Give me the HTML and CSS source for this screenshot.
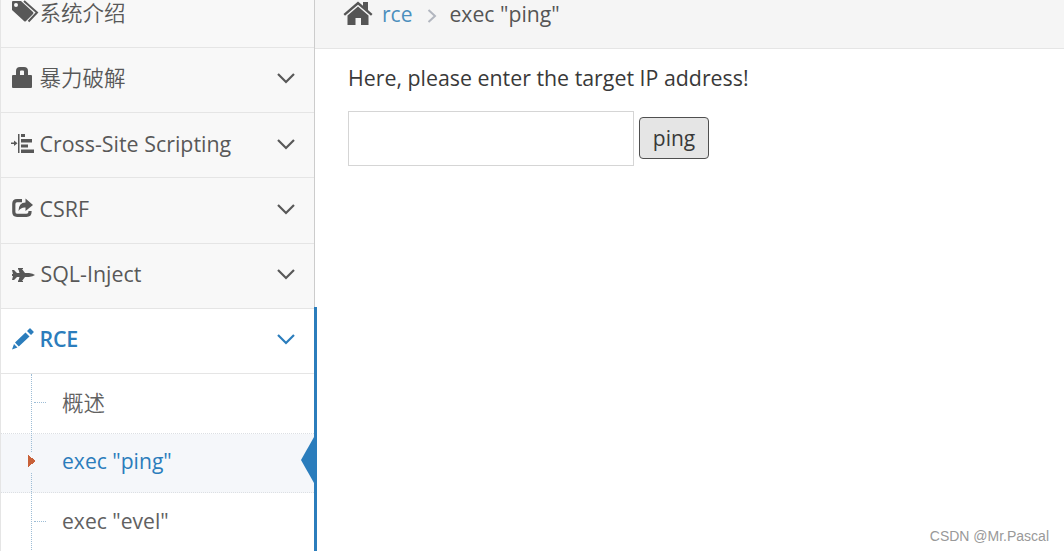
FILE: index.html
```html
<!DOCTYPE html>
<html lang="zh">
  <head>
    <meta charset="UTF-8" />
    <meta name="viewport" content="width=device-width, initial-scale=1.0" />
    <title>exec "ping"</title>
    <link rel="stylesheet" href="styles.css">
  </head>
  <body>
    <div class="main-container">
      <div class="sidebar">
        <ul class="nav-list">
          <li>
            <a class="nav-link">
              <svg class="menu-icon" viewBox="0 0 29 26"><path d="M2 0Q2-1 3-1H11L23 10Q24 11 23 12L16 19Q15 20 14 19L2 8ZM6 1A2 2 0 0 0 6 5A2 2 0 0 0 6 1Z" fill-rule="evenodd"/><path d="M14-1 27 10.500 18.500 19.500" fill="none" stroke="currentColor" stroke-width="2"/></svg>
              <span class="menu-text cjk">系统介绍</span>
            </a>
          </li>
          <li>
            <a class="nav-link">
              <svg class="menu-icon" viewBox="0 0 29 26"><path d="M2 9Q2 8 3 8H6V4Q6 0 10 0H14Q18 0 18 4V8H21Q22 8 22 9V20Q22 21 21 21H3Q2 21 2 20ZM10 8H14V4.500Q14 3.500 13 3.500H11Q10 3.500 10 4.500Z" fill-rule="evenodd"/></svg>
              <span class="menu-text cjk">暴力破解</span>
              <svg class="arrow" viewBox="0 0 18 12"><path d="M1 2 9 10 17 2"/></svg>
            </a>
          </li>
          <li>
            <a class="nav-link">
              <svg class="menu-icon" viewBox="0 0 29 26"><path d="M1 10.500H4V8.500L7.500 11.200 4 14V12H1ZM8 2H9.500V21H8ZM11 2H15V5H11ZM11 7H22V10.500H11ZM11 12.500H18V15.500H11ZM11 17.500H24V21H11Z"/></svg>
              <span class="menu-text">Cross-Site Scripting</span>
              <svg class="arrow" viewBox="0 0 18 12"><path d="M1 2 9 10 17 2"/></svg>
            </a>
          </li>
          <li>
            <a class="nav-link">
              <svg class="menu-icon" viewBox="0 0 29 26"><path d="M12 3.700H7Q3.800 3.700 3.800 7V15Q3.800 18.300 7 18.300H16.500Q20 18.300 20 15V14" fill="none" stroke="currentColor" stroke-width="3.200"/><path d="M15.500 1.500 23 8 15.500 14V10.500Q11 10 8.500 14Q8.500 5.500 15.500 5.500Z"/></svg>
              <span class="menu-text">CSRF</span>
              <svg class="arrow" viewBox="0 0 18 12"><path d="M1 2 9 10 17 2"/></svg>
            </a>
          </li>
          <li>
            <a class="nav-link">
              <svg class="menu-icon" viewBox="0 0 29 26"><path d="M2 7H4L7 10H9.500L8.500 6.500H8V5H13V6H12L15 10H19Q23 10.500 25 12Q23 13.500 19 14H15L12 18H13V19H8V17.500H8.500L9.500 14H7L4 17H2L3 13H2V11H3Z"/></svg>
              <span class="menu-text shifted">SQL-Inject</span>
              <svg class="arrow" viewBox="0 0 18 12"><path d="M1 2 9 10 17 2"/></svg>
            </a>
          </li>
          <li class="active">
            <a class="nav-link">
              <svg class="menu-icon" viewBox="0 0 29 26"><path d="M2 21.500 4 16 7.500 19.500ZM5 14.500 15.500 4.500 19.500 8.500 8.800 18.500ZM17 3 19.500 0.500Q20 0 20.500 0.500L23.500 3.500Q24 4 23.500 4.500L21 7Z"/></svg>
              <span class="menu-text">RCE</span>
              <svg class="arrow" viewBox="0 0 18 12"><path d="M1 2 9 10 17 2"/></svg>
            </a>
            <ul class="submenu">
              <li><a class="cjk">概述</a></li>
              <li class="current"><a>exec "ping"</a></li>
              <li><a>exec "evel"</a></li>
            </ul>
          </li>
        </ul>
      </div>

      <div class="main-content">
        <div class="breadcrumbs">
          <svg class="home-icon" viewBox="0 0 30 26"><path d="M0.500 14 15 1.500 20 5.800V2H25V10L29.500 14 28 15.800 15 4.800 2 15.800ZM4.500 15.500 15 6.500 25.500 15.500V25H18V18H12.500V25H4.500Z"/></svg>
          <a>rce</a>
          <svg class="separator" viewBox="0 0 10 14"><path d="M1.500 1 8 7 1.500 13"/></svg>
          <span>exec "ping"</span>
        </div>
        <div class="page-content">
          <p class="title">Here, please enter the target IP address!</p>
          <form class="ping-form">
            <input class="ipadd" type="text" name="ipaddress" />
            <input class="sub" type="button" value="ping" />
          </form>
        </div>
      </div>
    </div>
    <div class="watermark">CSDN @Mr.Pascal</div>
  </body>
</html>
```

FILE: styles.css
```css
* {
  box-sizing: border-box;
}

body {
  margin: 0;
  height: 551px;
  overflow: hidden;
  background: #fff;
  color: #393939;
  font-family: "Open Sans", "Noto Sans CJK SC", sans-serif;
  font-size: 21px;
}

ul {
  list-style: none;
  margin: 0;
  padding: 0;
}

.main-container {
  display: flex;
  height: 551px;
  overflow: hidden;
}

.sidebar {
  width: 315px;
  flex: none;
  border-left: 1px solid #e5e5e5;
  border-right: 1px solid #ccc;
  background: #f8f8f8;
}

.nav-list {
  margin-top: -17.2px;
}

.nav-link {
  display: flex;
  align-items: center;
  height: 65.2px;
  padding: 0 19.5px 0 9px;
  border-bottom: 1px solid #e5e5e5;
  color: #585858;
}

.menu-icon {
  width: 29px;
  height: 26px;
  flex: none;
  fill: currentColor;
  overflow: visible;
}

.menu-text {
  flex: 1;
  font-size: 21.4px;
  line-height: 30px;
  padding-left: 0.5px;
  padding-bottom: 3.4px;
}

.menu-text.shifted {
  padding-left: 1.5px;
}

.cjk {
  font-family: "Noto Sans CJK SC", sans-serif;
  font-size: 21.5px;
  font-weight: 350;
}

.menu-text.cjk {
  line-height: 26px;
  padding-bottom: 6px;
}

.arrow {
  width: 18px;
  height: 12px;
  margin-bottom: 3.5px;
  fill: none;
  stroke: currentColor;
  stroke-width: 2.2;
}

/* open item, with the blue bar over the sidebar edge */
.active {
  position: relative;
  background: #fff;
}

.active::after {
  content: "";
  position: absolute;
  top: -2px;
  right: -3px;
  width: 3px;
  height: 300px;
  background: #2b7dbc;
}

.active > .nav-link {
  color: #2b7dbc;
}

.active > .nav-link .menu-text {
  font-weight: 600;
  letter-spacing: -0.2px;
}

.submenu {
  position: relative;
}

.submenu::before {
  content: "";
  position: absolute;
  top: 0;
  bottom: 0;
  left: 30px;
  z-index: 1;
  border-left: 1px dotted #9dbdd6;
}

.submenu li {
  position: relative;
  height: 59px;
  border-bottom: 1px dotted #dcdfe3;
}

.submenu li:first-child {
  height: 60px;
}

.submenu a {
  display: block;
  padding-left: 61px;
  font-size: 21.1px;
  line-height: 56px;
  color: #616161;
}

.submenu a.cjk {
  font-size: 21.5px;
}

.submenu li::before {
  content: "";
  position: absolute;
  left: 33px;
  top: 28px;
  width: 12px;
  border-top: 1px dotted #9dbdd6;
}

.submenu .current {
  background: #f5f7fa;
}

.submenu .current a {
  line-height: 54px;
  color: #2b7dbc;
}

/* arrow marker, the box behind it breaks the dotted line */
.submenu .current::before {
  left: 27px;
  top: 18px;
  width: 8px;
  height: 21px;
  z-index: 2;
  border: 0;
  background:
    linear-gradient(to bottom left, transparent 50%, #c86139 50%) 0 3px / 8px 6px no-repeat,
    linear-gradient(to top left, transparent 50%, #c86139 50%) 0 9px / 8px 6px no-repeat,
    #f5f7fa;
}

.submenu .current::after {
  content: "";
  position: absolute;
  top: 3px;
  right: 0;
  width: 13px;
  height: 46px;
  background: #2b7dbc;
  clip-path: polygon(100% 0, 0 50%, 100% 100%);
}

.main-content {
  flex: 1;
}

.breadcrumbs {
  display: flex;
  align-items: flex-start;
  height: 49px;
  padding-left: 28px;
  border-bottom: 1px solid #e5e5e5;
  background: #f5f5f5;
  line-height: 28px;
  color: #555;
}

.breadcrumbs a {
  margin-left: 9px;
  color: #4c8fbd;
}

.breadcrumbs span {
  font-size: 21.2px;
}

.home-icon {
  width: 30px;
  height: 26px;
  fill: #555;
}

.separator {
  width: 10px;
  height: 14px;
  margin: 9px 12px 0 15px;
  fill: none;
  stroke: #b2b6bf;
  stroke-width: 2;
}

.page-content {
  padding: 14px 33px;
}

.title {
  margin: 0 0 18px;
  font-size: 21.35px;
  line-height: 30px;
}

.ping-form {
  display: flex;
  align-items: center;
  gap: 5px;
}

.ipadd {
  width: 286px;
  height: 55px;
  border: 1px solid #d5d5d5;
  font: inherit;
}

.sub {
  width: 70px;
  height: 42px;
  margin-bottom: 2px;
  padding: 0;
  border: 1px solid #4f4f4f;
  border-radius: 4px;
  background: #e5e5e5;
  color: #393939;
  font: inherit;
}

.watermark {
  position: absolute;
  right: 15px;
  bottom: 6px;
  color: #999;
  font-family: "Liberation Sans", Arial, sans-serif;
  font-size: 14px;
  line-height: 18px;
}
```
